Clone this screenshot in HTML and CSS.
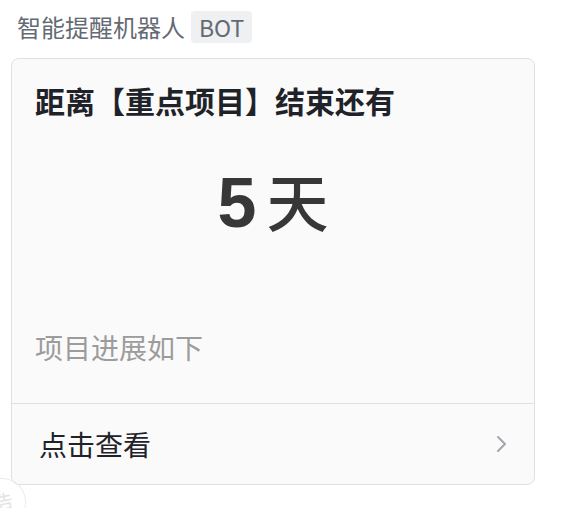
FILE: index.html
```html
<!DOCTYPE html>
<html lang="zh-CN">
<head>
    <meta charset="UTF-8">
    <meta name="viewport" content="width=device-width, initial-scale=1.0">
    <title>智能提醒机器人</title>
    <link rel="stylesheet" href="styles.css">
</head>
<body>
    <div class="page">
        <div class="sender">
            <span class="sender-name">智能提醒机器人</span>
            <span class="bot-tag">BOT</span>
        </div>

        <div class="card">
            <div class="card-body">
                <div class="card-title">距离【重点项目】结束还有</div>
                <div class="count"><span class="num">5</span>天</div>
                <div class="card-note">项目进展如下</div>
            </div>
            <div class="card-footer">
                <span>点击查看</span>
                <svg class="chevron" width="12" height="18" viewBox="0 0 12 18">
                    <polyline points="2,2 9,9 2,16" fill="none" stroke="#a2a7ae" stroke-width="2" stroke-linecap="round" stroke-linejoin="round"/>
                </svg>
            </div>
        </div>

        <div class="stamp">造</div>
    </div>
</body>
</html>
```

FILE: styles.css
```css
body {
    margin: 0;
    padding: 0;
    background: #fff;
    font-family: "Noto Sans CJK SC", "Noto Sans", sans-serif;
    color: #1f2329;
}
.page {
    position: relative;
    width: 524px;
    padding: 10px 0 0 11px;
    height: 498px;
    overflow: hidden;
}
.sender {
    display: flex;
    align-items: center;
    gap: 6px;
    height: 34px;
    padding-left: 6px;
}
.sender-name {
    font-size: 24px;
    line-height: 32px;
    color: #646a73;
}
.bot-tag {
    font-size: 23px;
    line-height: 32px;
    height: 32px;
    padding: 0 8px;
    color: #646a73;
    background: #eff0f1;
    border-radius: 4px;
}
.card {
    margin-top: 14px;
    border: 1px solid #dee0e3;
    border-radius: 8px;
    background: #fafafa;
}
.card-body {
    padding: 21px 23px 36px;
    border-bottom: 1px solid #dee0e3;
}
.card-title {
    font-size: 30px;
    line-height: 40px;
    font-weight: bold;
    color: #1f2329;
}
.count {
    margin-top: 40px;
    height: 80px;
    font-size: 62px;
    line-height: 80px;
    font-weight: 500;
    text-align: center;
    color: #373737;
}
.num {
    font-family: "Liberation Sans", Arial, sans-serif;
    font-size: 70px;
    font-weight: bold;
    line-height: 1;
    margin-right: 10px;
}
.card-note {
    margin-top: 87px;
    font-size: 28px;
    line-height: 40px;
    color: #9c9c9c;
}
.card-footer {
    display: flex;
    align-items: center;
    justify-content: space-between;
    height: 80px;
    padding: 0 26px 0 27px;
    font-size: 28px;
    color: #1f2329;
}
.stamp {
    position: absolute;
    left: -22px;
    top: 478px;
    width: 46px;
    height: 46px;
    border: 1px solid #ececec;
    border-radius: 50%;
    font-size: 22px;
    line-height: 46px;
    text-align: center;
    color: #e4e4e4;
    transform: rotate(-12deg);
}
```
